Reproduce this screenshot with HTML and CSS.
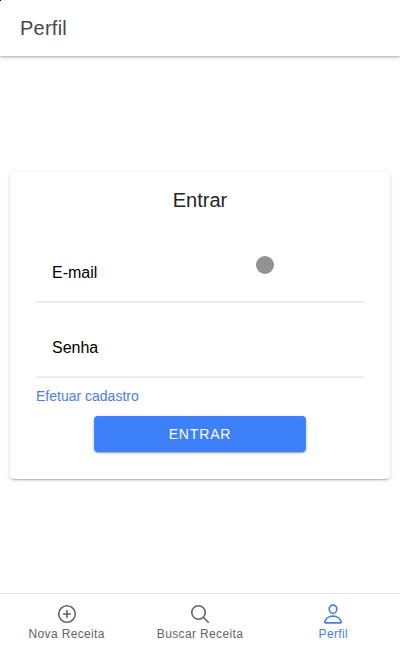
FILE: index.html
```html
<!DOCTYPE html>
<html lang="pt-BR">
<head>
<meta charset="utf-8">
<title>Perfil</title>
<link rel="stylesheet" href="styles.css">
</head>
<body>
<header class="toolbar"><h1>Perfil</h1></header>
<main class="content">
  <form class="card">
    <h2>Entrar</h2>
    <div class="field">E-mail</div>
    <div class="field">Senha</div>
    <a class="signup">Efetuar cadastro</a>
    <button type="button" class="submit">ENTRAR</button>
  </form>
</main>
<nav class="tabs">
  <a class="tab">
    <svg viewBox="0 0 512 512"><path d="M448 256c0-106-86-192-192-192S64 150 64 256s86 192 192 192 192-86 192-192z"/><path d="M256 176v160M336 256H176"/></svg>
    <span>Nova Receita</span>
  </a>
  <a class="tab">
    <svg viewBox="0 0 512 512"><path d="M221.1 64a157.1 157.1 0 1 0 157.1 157.1A157.1 157.1 0 0 0 221.1 64zM338.3 338.3 448 448"/></svg>
    <span>Buscar Receita</span>
  </a>
  <a class="tab active">
    <svg viewBox="0 0 512 512"><path d="M344 144c-3.9 52.9-44 96-88 96s-84.200-43.100-88-96c-4-55 35-96 88-96s92 42 88 96zM256 304c-87 0-175.300 48-191.640 138.600C62.390 453.520 68.570 464 80 464h352c11.440 0 17.620-10.480 15.650-21.400C431.300 352 343 304 256 304z"/></svg>
    <span>Perfil</span>
  </a>
</nav>
<div class="pointer"></div>
<div class="corner"></div>
</body>
</html>
```

FILE: styles.css
```css
* { box-sizing: border-box; }
body {
  margin: 0;
  height: 650px;
  display: flex;
  flex-direction: column;
  overflow: hidden;
  background: #fff;
  font-family: "Liberation Sans", Arial, sans-serif;
}
.toolbar {
  height: 56px;
  flex: none;
  display: flex;
  align-items: center;
  padding: 0 20px;
  box-shadow: 0 1px 2px rgba(0, 0, 0, .26), 0 2px 5px rgba(0, 0, 0, .1);
}
h1 { margin: 0; font-size: 20px; font-weight: 400; letter-spacing: .24px; color: #484848; }
.content {
  flex: 1;
  padding: 115.5px 10px 0;
}
.card {
  height: 307px;
  display: flex;
  flex-direction: column;
  padding: 15.500px 26px 0;
  border-radius: 4px;
  box-shadow: 0 3px 1px -2px rgba(0, 0, 0, .12), 0 1px 2px rgba(0, 0, 0, .16), 0 1px 5px rgba(0, 0, 0, .1);
}
h2 {
  margin: 0 0 34px;
  font-size: 20px;
  line-height: 26px;
  font-weight: 400;
  text-align: center;
  color: #262626;
}
.field {
  height: 56px;
  flex: none;
  padding: 17px 16px 0;
  font-size: 16px;
  line-height: 18px;
  color: #000;
  border-bottom: 2px solid #ebebeb;
}
.field + .field { margin-top: 19px; }
.signup {
  margin-top: 9px;
  font-size: 14px;
  line-height: 18px;
  color: #4f7de0;
}
.submit {
  width: 212px;
  height: 36px;
  margin: 10.500px auto 0;
  padding: 1px 0 0;
  border: 0;
  border-radius: 4px;
  background: #3d80fa;
  color: #fff;
  font: 14px "Liberation Sans", Arial, sans-serif;
  letter-spacing: .84px;
  box-shadow: 0 3px 1px -2px rgba(0, 0, 0, .2), 0 1px 2px rgba(0, 0, 0, .14), 0 1px 5px rgba(0, 0, 0, .12);
}
.tabs {
  height: 57px;
  flex: none;
  display: grid;
  grid-template-columns: repeat(3, 1fr);
  border-top: 1px solid #e6e6e6;
}
.tab {
  display: flex;
  flex-direction: column;
  align-items: center;
  padding-top: 9px;
  color: #656565;
  font-size: 12px;
  line-height: 14px;
  letter-spacing: .36px;
}
.tab svg {
  width: 22px;
  height: 22px;
  margin-bottom: 2px;
  fill: none;
  stroke: currentColor;
  stroke-width: 38;
  stroke-linecap: round;
  stroke-linejoin: round;
}
.active { color: #487fe0; }
.pointer {
  position: absolute;
  left: 256px;
  top: 256px;
  width: 18px;
  height: 18px;
  border-radius: 50%;
  background: #929292;
}
.corner {
  position: absolute;
  left: 0;
  top: 0;
  width: 1px;
  height: 1px;
  background: #000;
}
```
